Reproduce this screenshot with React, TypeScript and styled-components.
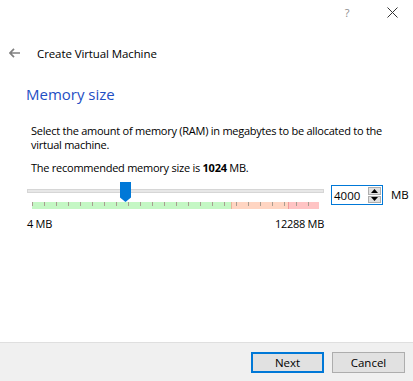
import React from "react";
import styled, { createGlobalStyle } from "styled-components";

const MIN_MB = 4;
const MAX_MB = 12288;
const VALUE_MB = 4000;
const TICK_COUNT = 24;

const GlobalStyle = createGlobalStyle`
  html, body {
    margin: 0;
    padding: 0;
    background: #ffffff;
  }
  body {
    font-family: "Open Sans", "Noto Sans", "DejaVu Sans", sans-serif;
    font-size: 11.5px;
    color: #000000;
  }
`;

const App: React.FC = () => {
  const trackWidth = 286;
  const handleLeft = ((VALUE_MB - MIN_MB) / (MAX_MB - MIN_MB)) * trackWidth;

  return (
    <Window>
      <GlobalStyle />
      <TitleBar>
        <HelpButton>?</HelpButton>
        <CloseButton aria-label="Close">
          <svg width="11" height="11" viewBox="0 0 11 11">
            <path d="M0.5 0.5 L10.5 10.5 M10.5 0.5 L0.5 10.5" stroke="#333" strokeWidth="1" />
          </svg>
        </CloseButton>
      </TitleBar>

      <Header>
        <BackButton aria-label="Back">
          <svg width="11" height="10" viewBox="0 0 11 10">
            <path d="M5 0.8 L1 5 L5 9.2 M1 5 H11" stroke="#808080" strokeWidth="1.7" fill="none" />
          </svg>
        </BackButton>
        <HeaderTitle>Create Virtual Machine</HeaderTitle>
      </Header>

      <Content>
        <PageTitle>Memory size</PageTitle>
        <Paragraph>
          Select the amount of memory (RAM) in megabytes to be allocated to the virtual machine.
        </Paragraph>
        <Paragraph tight>
          The recommended memory size is <b>1024</b> MB.
        </Paragraph>

        <SliderRow>
          <SliderColumn>
            <Slider>
              <Groove />
              <Handle style={{ left: handleLeft }}>
                <svg width="11" height="20" viewBox="0 0 11 20">
                  <path d="M0 0 H11 V15.5 L5.5 20 L0 15.5 Z" fill="#0078d7" />
                </svg>
              </Handle>
              <Scale>
                <Segment width={199} color="#c4f7c4" />
                <Segment width={57} color="#ffd5c2" edge="#e8b49c" />
                <Segment width={31} color="#ffc4c4" edge="#f09a9a" />
                <Ticks>
                  {Array.from({ length: TICK_COUNT }).map((_, i) => (
                    <Tick key={i} />
                  ))}
                </Ticks>
              </Scale>
            </Slider>
            <Limits>
              <span>4 MB</span>
              <span>12288 MB</span>
            </Limits>
          </SliderColumn>

          <SpinBox>
            <SpinValue>4000</SpinValue>
            <SpinButtons>
              <SpinButton>
                <svg width="7" height="4" viewBox="0 0 7 4">
                  <path d="M3.5 0 L7 4 H0 Z" fill="#000" />
                </svg>
              </SpinButton>
              <SpinButton>
                <svg width="7" height="4" viewBox="0 0 7 4">
                  <path d="M0 0 H7 L3.5 4 Z" fill="#000" />
                </svg>
              </SpinButton>
            </SpinButtons>
          </SpinBox>
          <Unit>MB</Unit>
        </SliderRow>
      </Content>

      <Footer>
        <Button primary>Next</Button>
        <Button>Cancel</Button>
      </Footer>
    </Window>
  );
};

const Window = styled.div`
  width: 413px;
  height: 381px;
  display: flex;
  flex-direction: column;
  background: #ffffff;
  overflow: hidden;
`;

const TitleBar = styled.div`
  height: 24px;
  display: flex;
  justify-content: flex-end;
  align-items: center;
`;

const HelpButton = styled.div`
  width: 48px;
  text-align: center;
  color: #8c8c8c;
  font-size: 11px;
`;

const CloseButton = styled.div`
  width: 42px;
  display: flex;
  justify-content: center;
  align-items: center;
`;

const Header = styled.div`
  height: 48px;
  display: flex;
  align-items: center;
  margin-top: 5px;
`;

const BackButton = styled.div`
  width: 37px;
  padding-left: 9px;
  box-sizing: border-box;
  display: flex;
  align-items: center;
`;

const HeaderTitle = styled.div`
  font-size: 11.5px;
  letter-spacing: -0.1px;
`;

const Content = styled.div`
  flex: 1;
  padding: 7px 0 0 27px;
`;

const PageTitle = styled.div`
  font-size: 15px;
  color: #1f4fc4;
  margin: 0 0 20px -1px;
  line-height: 20px;
`;

const Paragraph = styled.p<{ tight?: boolean }>`
  margin: 0 8px ${({ tight }) => (tight ? 7 : 9)}px 4px;
  font-size: 11px;
  line-height: 14px;
  letter-spacing: -0.25px;
`;

const SliderRow = styled.div`
  display: flex;
  align-items: flex-start;
  margin-top: 2px;
`;

const SliderColumn = styled.div`
  width: 297px;
  display: flex;
  flex-direction: column;
`;

const Slider = styled.div`
  position: relative;
  height: 28px;
`;

const Groove = styled.div`
  position: absolute;
  top: 7px;
  left: 0;
  right: 0;
  height: 4px;
  box-sizing: border-box;
  background: #e7e7e7;
  border: 1px solid #d6d6d6;
`;

const Handle = styled.div`
  position: absolute;
  top: 0;
  width: 11px;
  height: 20px;
  z-index: 1;
  svg {
    display: block;
  }
`;

const Scale = styled.div`
  position: absolute;
  top: 20px;
  left: 5px;
  width: 287px;
  height: 7px;
  display: flex;
`;

const Segment = styled.div<{ width: number; color: string; edge?: string }>`
  width: ${({ width }) => width}px;
  height: 100%;
  background: ${({ color }) => color};
  box-shadow: ${({ edge }) => (edge ? `inset 1px 0 0 ${edge}` : "none")};
`;

const Ticks = styled.div`
  position: absolute;
  inset: 0 auto auto 0;
  display: flex;
  gap: 11px;
`;

const Tick = styled.div`
  width: 1px;
  height: 4px;
  background: #a89d90;
`;

const Limits = styled.div`
  display: flex;
  justify-content: space-between;
  margin-top: 6px;
  font-size: 11px;
  line-height: 15px;
  letter-spacing: -0.3px;
`;

const SpinBox = styled.div`
  margin: 3px 0 0 7px;
  width: 52px;
  height: 20px;
  box-sizing: border-box;
  border: 1px solid #0078d7;
  display: flex;
  align-items: stretch;
`;

const SpinValue = styled.div`
  flex: 1;
  padding-left: 2px;
  display: flex;
  align-items: center;
`;

const SpinButtons = styled.div`
  width: 13px;
  display: flex;
  flex-direction: column;
  gap: 1px;
  padding: 1px 1px 1px 0;
`;

const SpinButton = styled.div`
  flex: 1;
  background: #e1e1e1;
  border: 1px solid #adadad;
  display: flex;
  align-items: center;
  justify-content: center;
`;

const Unit = styled.div`
  margin: 5px 0 0 8px;
`;

const Footer = styled.div`
  height: 38px;
  border-top: 1px solid #dfdfdf;
  background: #f0f0f0;
  display: flex;
  justify-content: flex-end;
  align-items: center;
  gap: 8px;
  padding-right: 8px;
`;

const Button = styled.button<{ primary?: boolean }>`
  width: 73px;
  height: 21px;
  box-sizing: border-box;
  padding: 0;
  font-family: inherit;
  font-size: 11.5px;
  color: #000;
  background: #e1e1e1;
  border: ${({ primary }) => (primary ? "2px solid #0078d7" : "1px solid #adadad")};
`;

export default App;
